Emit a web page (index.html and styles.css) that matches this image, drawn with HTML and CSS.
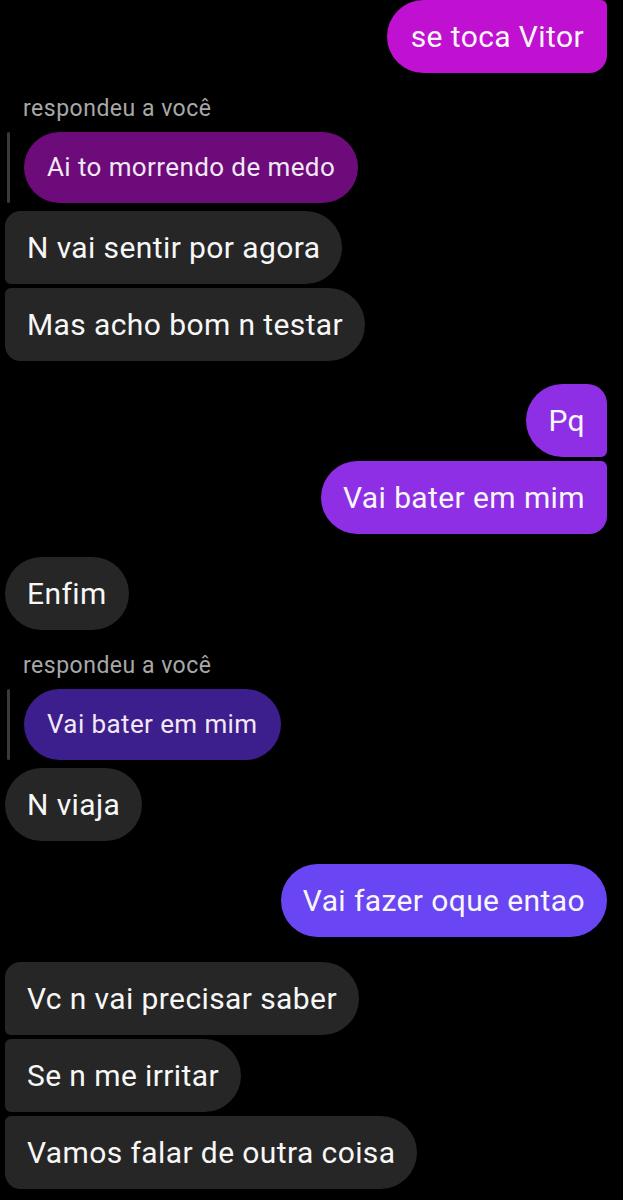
FILE: index.html
```html
<!DOCTYPE html>
<html lang="pt">
<head>
<meta charset="utf-8">
<link rel="stylesheet" href="styles.css">
</head>
<body>
<main class="chat">
  <div class="row sent"><div class="bubble magenta last">se toca Vitor</div></div>

  <div class="label gap-top">respondeu a você</div>
  <div class="reply">
    <div class="reply-bar"></div>
    <div class="quote q-magenta">Ai to morrendo de medo</div>
  </div>
  <div class="row recv gap-s"><div class="bubble gray first">N vai sentir por agora</div></div>
  <div class="row recv gap-xs"><div class="bubble gray last">Mas acho bom n testar</div></div>

  <div class="row sent gap-l"><div class="bubble violet first">Pq</div></div>
  <div class="row sent gap-xs"><div class="bubble violet last">Vai bater em mim</div></div>

  <div class="row recv gap-l"><div class="bubble gray">Enfim</div></div>

  <div class="label gap-top">respondeu a você</div>
  <div class="reply">
    <div class="reply-bar"></div>
    <div class="quote q-indigo">Vai bater em mim</div>
  </div>
  <div class="row recv gap-s"><div class="bubble gray">N viaja</div></div>

  <div class="row sent gap-l"><div class="bubble blue">Vai fazer oque entao</div></div>

  <div class="row recv gap-xl"><div class="bubble gray first">Vc n vai precisar saber</div></div>
  <div class="row recv gap-xs"><div class="bubble gray mid">Se n me irritar</div></div>
  <div class="row recv gap-xs"><div class="bubble gray last">Vamos falar de outra coisa</div></div>
</main>
</body>
</html>
```
FILE: styles.css
```css
html, body {
  margin: 0;
  padding: 0;
  background: #000;
}
body {
  font-family: Roboto, "Noto Sans", sans-serif;
  color: #fff;
}
.chat {
  display: flex;
  flex-direction: column;
  padding: 0 16px 0 5px;
}
.row {
  display: flex;
}
.row.sent { justify-content: flex-end; }
.row.recv { justify-content: flex-start; }
.gap-xs { margin-top: 4px; }
.gap-s { margin-top: 8px; }
.gap-l { margin-top: 23px; }
.gap-xl { margin-top: 25px; }
.gap-top { margin-top: 23px; }

.bubble {
  height: 73px;
  line-height: 73px;
  padding: 0 22px;
  font-size: 30px;
  letter-spacing: 0.4px;
  border-radius: 37px;
  white-space: nowrap;
  color: #f7f7f7;
}
.gray { background: #262626; }
.magenta { background: #c010d1; padding: 0 23px 0 24px; }
.violet { background: #8e2fe6; }
.blue { background: #6a45f3; }

.sent .first { border-radius: 37px 20px 6px 37px; }
.sent .last { border-radius: 37px 6px 18px 37px; }
.recv .first { border-radius: 16px 37px 37px 6px; }
.recv .mid { border-radius: 6px 37px 37px 6px; }
.recv .last { border-radius: 6px 37px 37px 16px; }

.label {
  font-size: 23px;
  letter-spacing: 0.5px;
  line-height: 26px;
  color: #a8a8a8;
  padding-left: 18px;
}
.reply {
  display: flex;
  align-items: stretch;
  gap: 14px;
  margin-top: 10px;
  padding-left: 2px;
}
.reply-bar {
  width: 3px;
  background: #3a3a3a;
  border-radius: 2px;
}
.quote {
  height: 71px;
  line-height: 71px;
  padding: 0 23px;
  font-size: 26px;
  letter-spacing: 0.4px;
  border-radius: 36px;
  color: #f2e8f5;
  white-space: nowrap;
}
.q-magenta { background: #6c0b79; }
.q-indigo { background: #3c1e8c; }
```
